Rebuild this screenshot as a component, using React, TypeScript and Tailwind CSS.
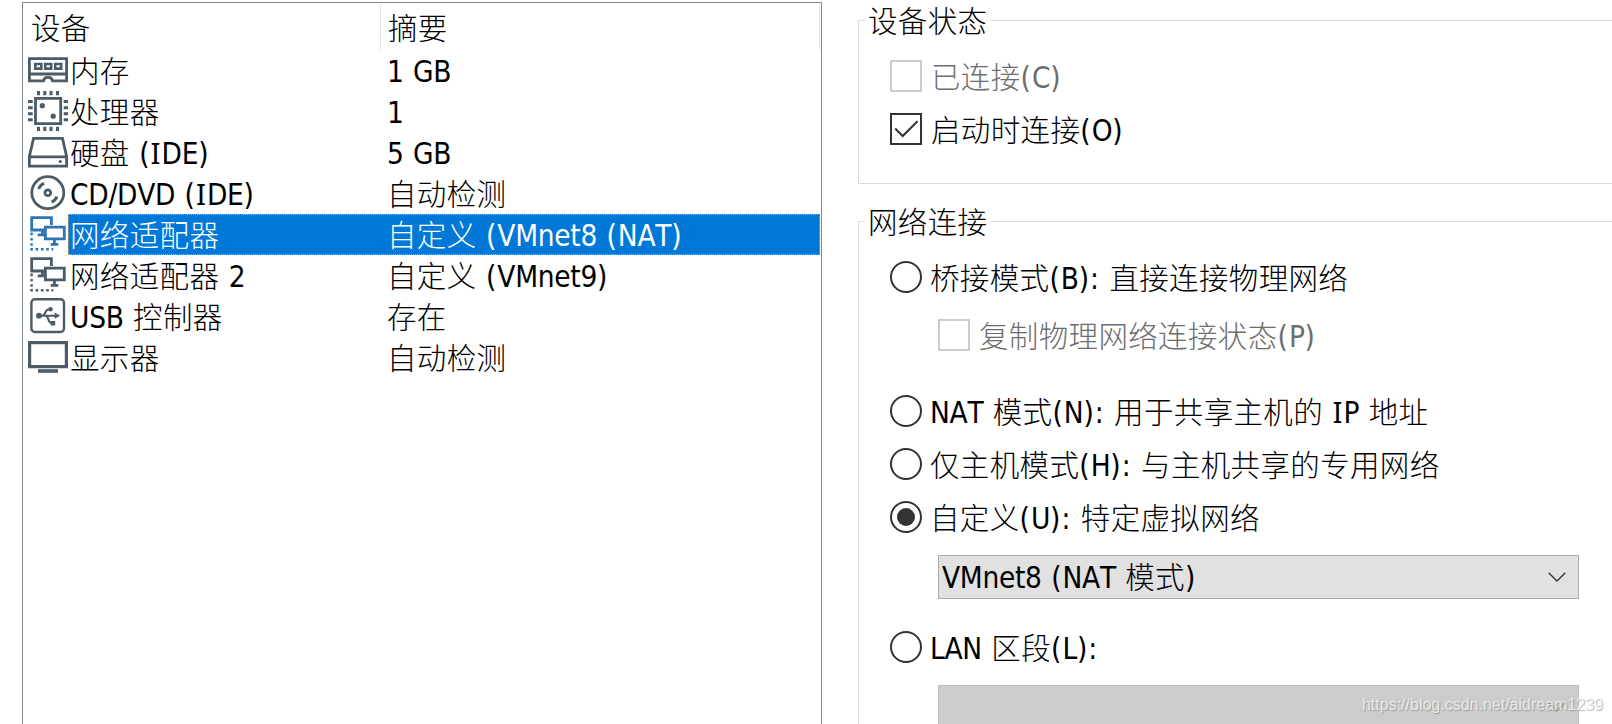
import type { ReactNode } from 'react'

const INK = '#4b5b68'

// Each kind of run (Chinese, capital I, punctuation, other Latin) has its own face and tracking
function Label({ text, className = '' }: { text: string; className?: string }) {
  const runs = text.split(/([\u4e00-\u9fff]+|[(): ]+|I)/).filter(Boolean)
  return (
    <span className={`whitespace-pre font-['DejaVu_Sans_Condensed',sans-serif] text-[29.5px] [font-kerning:none] ${className}`}>
      {runs.map((run, i) => {
        if (/[\u4e00-\u9fff]/.test(run)) {
          return <span key={i} className="font-['Noto_Sans_CJK_SC',sans-serif] font-light leading-none tracking-[0.35px]">{run}</span>
        }
        if (run === 'I') {
          return <span key={i} className="font-['Noto_Sans',sans-serif] leading-none tracking-[1px]">{run}</span>
        }
        return <span key={i} className={/[(): ]/.test(run) ? 'tracking-[1px]' : 'tracking-[-0.3px]'}>{run}</span>
      })}
    </span>
  )
}

function Icon({ children, color = INK }: { children: ReactNode; color?: string }) {
  return (
    <svg width="40" height="41" viewBox="0 0 40 41" fill="none" stroke={color} strokeWidth="2.8" className="block shrink-0">
      {children}
    </svg>
  )
}

function MemoryIcon() {
  return (
    <Icon>
      <path d="M1.4 8.6h37.2v22.2H24.5c-1-4.5-8-4.5-9 0H1.4zM1 24h38" />
      <path strokeWidth="2.6" d="M7.3 14h6v4.6h-6zM17.2 14h6v4.6h-6zM27.2 14h6v4.6h-6z" />
    </Icon>
  )
}

function CpuIcon() {
  return (
    <Icon>
      <path d="M7.5 7.3h25.2v25.4H7.5z" />
      <path strokeWidth="3" d="M10.5 0v4.3M16.8 0v4.3M23 0v4.3M29.5 0v4.3M10.5 35.7V40M16.8 35.7V40M23 35.7V40M29.5 35.7V40M0 10.5h4.7M0 16.8h4.7M0 22.8h4.7M0 28.8h4.7M35.7 10.5H40M35.7 16.8H40M35.7 22.8H40M35.7 28.8H40" />
      <circle cx="14.3" cy="14.7" r="2.6" fill={INK} stroke="none" />
      <circle cx="25.2" cy="25.2" r="2.6" fill={INK} stroke="none" />
    </Icon>
  )
}

function DiskIcon() {
  return (
    <Icon>
      <path d="M5.5 6.4h29l4.1 18v9.8H1.4v-9.8zM1.3 24.8h37.4" />
      <circle cx="32.3" cy="29.5" r="1.6" fill={INK} stroke="none" />
    </Icon>
  )
}

function DiscIcon() {
  return (
    <Icon>
      <circle cx="19.8" cy="19.7" r="16" />
      <circle cx="19.8" cy="19.7" r="2.9" />
      <path strokeWidth="3" d="M10.6 15.8A10 10 0 0 1 16 10.4M29 23.6a10 10 0 0 1-5.4 5.4" />
    </Icon>
  )
}

function NetworkIcon({ color }: { color?: string }) {
  return (
    <Icon color={color}>
      <path d="M16 16H3.7V3.7h19.7V11M14.4 16v5.5M9.7 20.8h6.3" />
      <path d="M17.4 13.2h18.9v11.6H17.4zM26.4 25v5M22.7 30.4h7.6" />
      <path strokeWidth="2.4" strokeDasharray="2.6 2.7" d="M3.6 18.6v14M2.3 35.3h23" />
    </Icon>
  )
}

function UsbIcon() {
  return (
    <Icon>
      <rect x="3.4" y="3.2" width="32.6" height="32.8" rx="3.5" strokeWidth="2.4" />
      <path strokeWidth="2" d="M10 19.7h18M14 19.7c4 0 2.5-6.5 7-6.5h1.5M17.5 19.7c3.5 0 2 7.2 6 7.2h1.5" />
      <g fill={INK} stroke="none">
        <circle cx="11" cy="19.7" r="2.9" />
        <circle cx="22.6" cy="13.2" r="2.2" />
        <path d="M22.8 25h4.4v4.4h-4.4zM26.6 16.6l5.6 3.1-5.6 3.1z" />
      </g>
    </Icon>
  )
}

function DisplayIcon() {
  return (
    <Icon>
      <path strokeWidth="3.2" d="M1.6 5.6h36.8v24H1.6z" />
      <path strokeWidth="3.6" d="M10 34h20" />
    </Icon>
  )
}

const devices = [
  { icon: <MemoryIcon />, name: '内存', summary: '1 GB' },
  { icon: <CpuIcon />, name: '处理器', summary: '1' },
  { icon: <DiskIcon />, name: '硬盘 (IDE)', summary: '5 GB' },
  { icon: <DiscIcon />, name: 'CD/DVD (IDE)', summary: '自动检测' },
  { icon: <NetworkIcon color="#2f74b5" />, name: '网络适配器', summary: '自定义 (VMnet8 (NAT)', selected: true },
  { icon: <NetworkIcon />, name: '网络适配器 2', summary: '自定义 (VMnet9)' },
  { icon: <UsbIcon />, name: 'USB 控制器', summary: '存在' },
  { icon: <DisplayIcon />, name: '显示器', summary: '自动检测' },
]

function DeviceList() {
  return (
    <section className="ml-[22px] mt-[2px] h-[740px] w-[800px] shrink-0 border border-[#828790] pt-px">
      <div className="mr-px flex h-[46px] border-r border-[#e5e5e5] leading-[51px]">
        <div className="w-[358px] border-r border-[#e5e5e5] pl-[8px]"><Label text="设备" /></div>
        <div className="pl-[7px]"><Label text="摘要" /></div>
      </div>
      {devices.map((d, i) => (
        <div key={i} className="flex h-[41px] pl-[5px] leading-[42px]">
          {d.icon}
          <div className={`mr-px flex flex-1 border border-dotted ${d.selected ? 'border-[#ff9a3c] bg-[#0078d7] text-white' : 'border-transparent'}`}>
            <div className="w-[318px] pl-px"><Label text={d.name} /></div>
            <div><Label text={d.summary} /></div>
          </div>
        </div>
      ))}
    </section>
  )
}

function Group({ title, className, children }: { title: string; className: string; children: ReactNode }) {
  return (
    <fieldset className={`min-w-0 border border-[#dcdcdc] pl-[6px] ${className}`}>
      <legend className="h-[41px] px-[3px] pt-[4px] leading-[37px]"><Label text={title} /></legend>
      <div className="pl-[25px]">{children}</div>
    </fieldset>
  )
}

function Check({ text, checked, disabled, className }: { text: string; checked?: boolean; disabled?: boolean; className: string }) {
  return (
    <label className={`flex h-8 items-center gap-[9px] leading-8 ${disabled ? 'text-[#6d6d6d]' : ''} ${className}`}>
      <span className={`size-8 shrink-0 border-2 bg-white ${disabled ? 'border-[#cccccc]' : 'border-[#333333]'}`}>
        {checked && (
          <svg width="28" height="28" viewBox="0 0 28 28" fill="none" stroke="#333" strokeWidth="2">
            <path d="M3.2 13.5l7.5 7.5L25.5 6.3" />
          </svg>
        )}
      </span>
      <Label text={text} className="pt-[2px]" />
    </label>
  )
}

function Radio({ text, checked, className }: { text: string; checked?: boolean; className: string }) {
  return (
    <label className={`flex h-8 items-center gap-[8px] leading-8 ${className}`}>
      <span className="flex size-8 shrink-0 items-center justify-center rounded-full border-2 border-[#333333]">
        {checked && <span className="size-[18px] rounded-full bg-[#333333]" />}
      </span>
      <Label text={text} className="pt-[2px]" />
    </label>
  )
}

function Combo({ value = '', className, stroke }: { value?: string; className: string; stroke: string }) {
  return (
    <div className={`ml-[48px] flex h-[44px] w-[641px] items-center justify-between border pl-[3px] pr-[12px] ${className}`}>
      <Label text={value} className="pt-[2px]" />
      <svg width="18" height="10" viewBox="0 0 18 10" fill="none" stroke={stroke} strokeWidth="1.3">
        <path d="M.7.7L9 9 17.3.7" />
      </svg>
    </div>
  )
}

export default function App() {
  return (
    <main className="relative flex h-[724px] w-[1612px] overflow-hidden bg-white text-black">
      <DeviceList />
      <div className="ml-[36px] w-[790px] shrink-0">
        <Group title="设备状态" className="h-[184px]">
          <Check className="mt-[19px]" text="已连接(C)" disabled />
          <Check className="mt-[21px]" text="启动时连接(O)" checked />
        </Group>
        <Group title="网络连接" className="mt-[17px] h-[560px]">
          <Radio className="mt-[19px]" text="桥接模式(B): 直接连接物理网络" />
          <Check className="mt-[26px] ml-[48px]" text="复制物理网络连接状态(P)" disabled />
          <Radio className="mt-[44px]" text="NAT 模式(N): 用于共享主机的 IP 地址" />
          <Radio className="mt-[21px]" text="仅主机模式(H): 与主机共享的专用网络" />
          <Radio className="mt-[21px]" text="自定义(U): 特定虚拟网络" checked />
          <Combo className="mt-[22px] border-[#adadad] bg-[#e1e1e1]" stroke="#333" value="VMnet8 (NAT 模式)" />
          <Radio className="mt-[32px]" text="LAN 区段(L):" />
          <Combo className="mt-[22px] border-[#bfbfbf] bg-[#cccccc]" stroke="#a0a0a0" />
        </Group>
      </div>
      <span className="absolute right-[9px] bottom-[9px] font-['Liberation_Sans',sans-serif] text-[16px] leading-5 text-white/70 [text-shadow:1px_1px_1px_rgba(120,120,120,0.55)]">
        https://blog.csdn.net/aidream1239
      </span>
    </main>
  )
}
